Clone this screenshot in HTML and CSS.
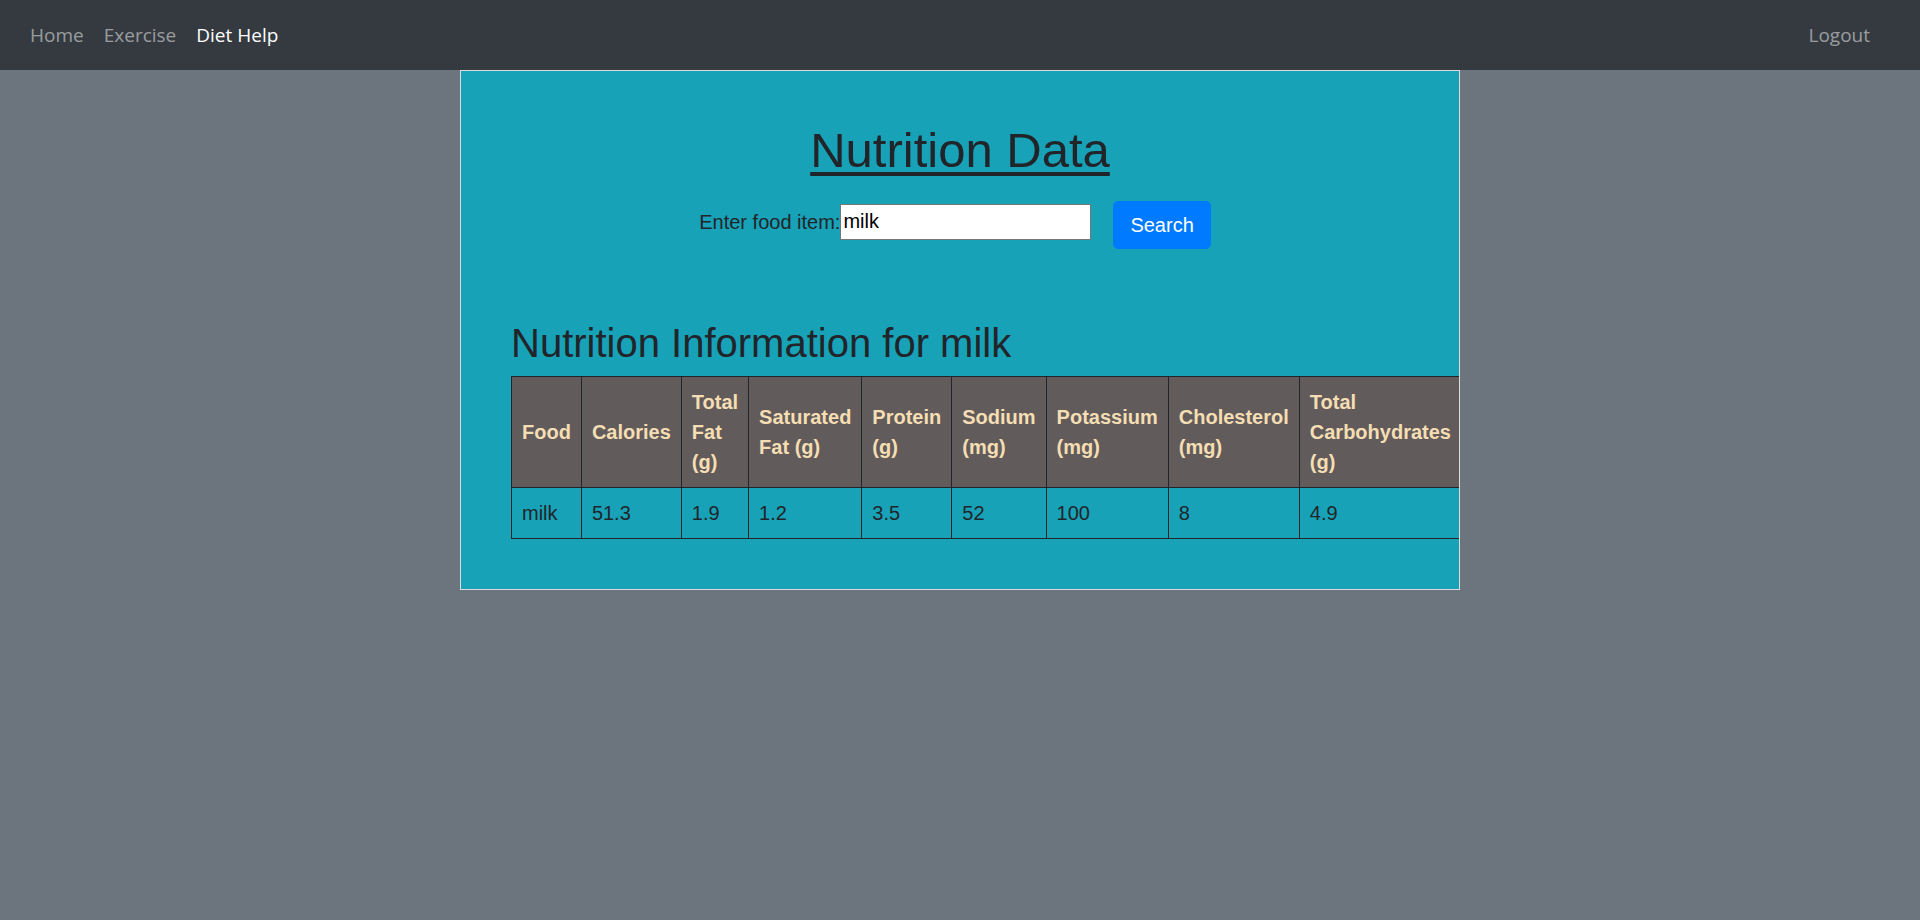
FILE: index.html
```html
<!DOCTYPE html>
<html lang="en">
<head>
<meta charset="utf-8">
<title>Nutrition Data</title>
<link rel="stylesheet" href="styles.css">
</head>
<body>
<nav class="navbar">
  <div class="nav-left">
    <a class="nav-link" href="#">Home</a>
    <a class="nav-link" href="#">Exercise</a>
    <a class="nav-link active" href="#">Diet Help</a>
  </div>
  <a class="nav-link" href="#">Logout</a>
</nav>
<main class="card">
  <h1 class="title">Nutrition Data</h1>
  <form class="search-row">
    <label class="search-label" for="food">Enter food item:</label>
    <input id="food" class="search-input" type="text" value="milk">
    <button class="btn-search" type="button">Search</button>
  </form>
  <h2 class="info-title">Nutrition Information for milk</h2>
  <table class="nutrition-table">
    <thead>
      <tr>
        <th>Food</th>
        <th>Calories</th>
        <th>Total Fat (g)</th>
        <th>Saturated Fat (g)</th>
        <th>Protein (g)</th>
        <th>Sodium (mg)</th>
        <th>Potassium (mg)</th>
        <th>Cholesterol (mg)</th>
        <th class="last-col">Total Carbohydrates (g)</th>
      </tr>
    </thead>
    <tbody>
      <tr>
        <td>milk</td>
        <td>51.3</td>
        <td>1.9</td>
        <td>1.2</td>
        <td>3.5</td>
        <td>52</td>
        <td>100</td>
        <td>8</td>
        <td class="last-col">4.9</td>
      </tr>
    </tbody>
  </table>
</main>
</body>
</html>
```

FILE: styles.css
```css
html, body {
  margin: 0;
  padding: 0;
}

body {
  background: #6c757d;
  font-family: "Liberation Sans", Arial, sans-serif;
  color: #212529;
  min-height: 920px;
}

.navbar {
  height: 70px;
  box-sizing: border-box;
  background: #343a40;
  display: flex;
  align-items: center;
  justify-content: space-between;
  padding: 0 40px 0 20px;
  font-family: "Open Sans", "Noto Sans", sans-serif;
  font-size: 19px;
}

.nav-left {
  display: flex;
  align-items: center;
}

.nav-link {
  display: block;
  padding: 0 10px;
  line-height: 28px;
  color: rgba(255, 255, 255, 0.5);
  text-decoration: none;
}

.nav-link.active {
  color: #ffffff;
}

.card {
  display: block;
  width: 1000px;
  box-sizing: border-box;
  margin: 0 auto;
  border: 1px solid #dcdcdc;
  background: #17a2b8;
  padding: 50px;
  overflow: hidden;
}

.title {
  margin: 0 0 21px;
  font-size: 49px;
  font-weight: 400;
  line-height: 1.2;
  text-align: center;
  text-decoration: underline;
  text-decoration-thickness: 4px;
  text-underline-offset: 5px;
}

.search-row {
  display: flex;
  justify-content: center;
  align-items: flex-start;
  margin: 0 0 70px;
  padding-right: 10px;
}

.search-label {
  margin-top: 6px;
  font-size: 20px;
  line-height: 30px;
}

.search-input {
  width: 251px;
  height: 36px;
  box-sizing: border-box;
  border: 1px solid #767676;
  border-radius: 0;
  padding: 1px 2px;
  margin: 3px 0 0;
  font-family: "Liberation Sans", Arial, sans-serif;
  font-size: 20px;
  color: #000000;
  background: #ffffff;
}

.btn-search {
  margin: 0 0 0 22px;
  background: #007bff;
  color: #ffffff;
  border: 1px solid #007bff;
  border-radius: 5px;
  padding: 8px 16px;
  font-family: "Liberation Sans", Arial, sans-serif;
  font-size: 20px;
  line-height: 30px;
}

.info-title {
  margin: 0 0 9px;
  font-size: 40px;
  font-weight: 400;
  line-height: 1.2;
}

.nutrition-table {
  border-collapse: collapse;
  font-size: 20px;
  line-height: 30px;
}

.nutrition-table th,
.nutrition-table td {
  border: 1px solid #212529;
  padding: 10px;
  text-align: left;
}

.nutrition-table th {
  background: #615b5b;
  color: #f5deb3;
  font-weight: 700;
  vertical-align: middle;
}

.nutrition-table td {
  color: #212529;
  vertical-align: top;
}

.nutrition-table .last-col {
  padding-right: 16px;
}
```
